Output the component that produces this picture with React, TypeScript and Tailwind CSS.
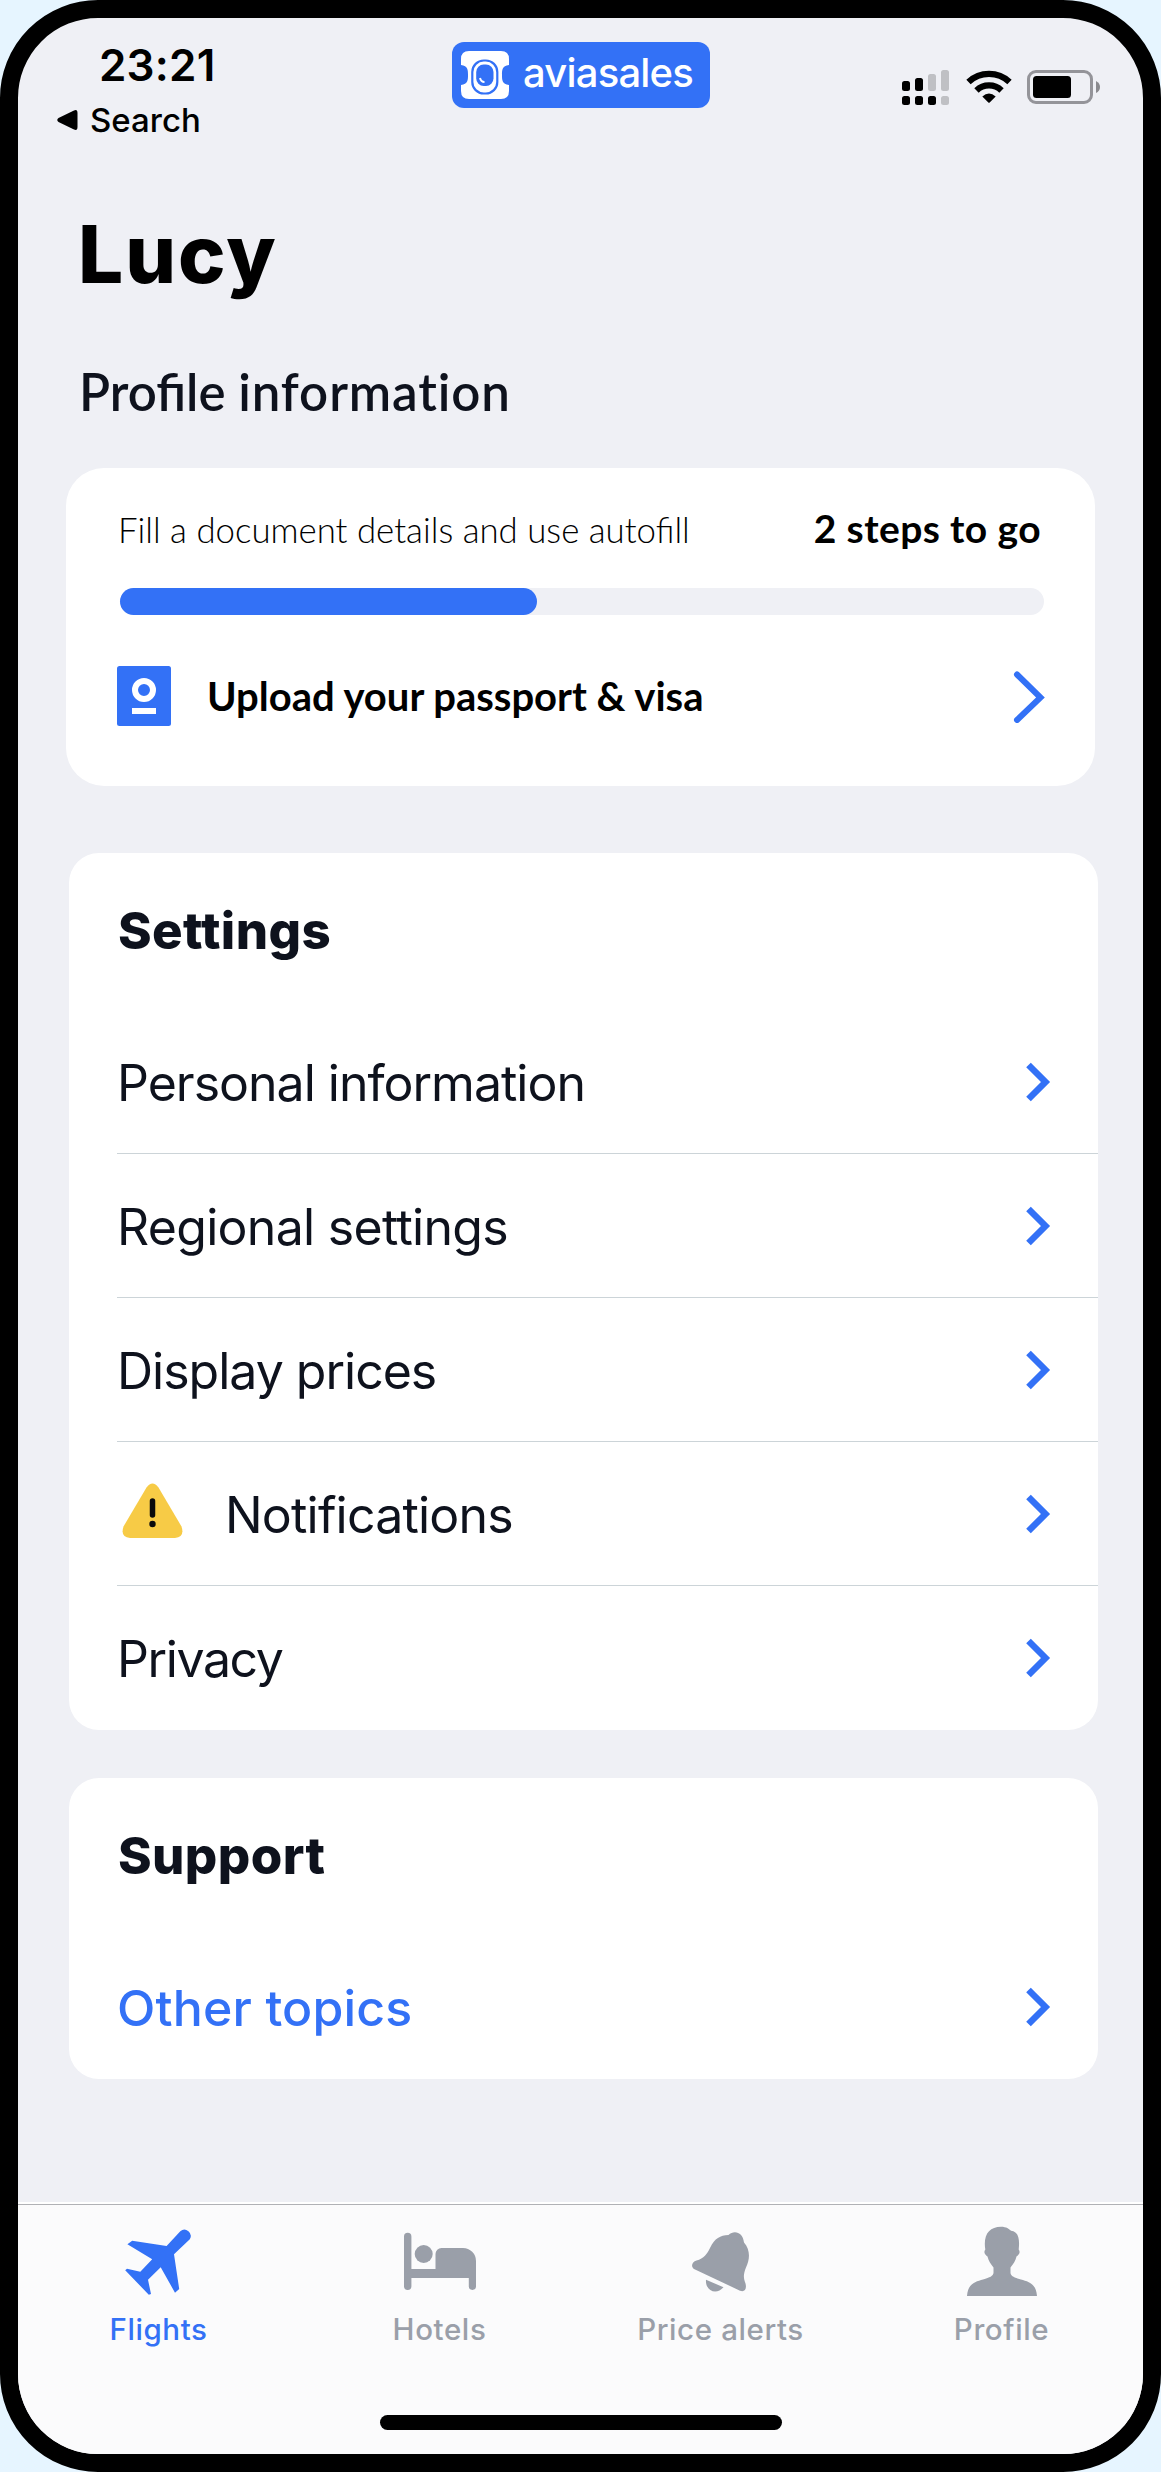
import React from 'react';
import { clsx } from 'clsx';

interface Row {
  label: string;
  warning?: boolean;
  accent?: boolean;
  spacing: string;
}

interface Tab {
  label: string;
  icon: React.FC;
  active?: boolean;
}

const PlaneIcon = () => (
  <svg width="68" height="68" viewBox="0 0 68 68" fill="currentColor">
    <path d="M55.3 3.2A6.3 6.3 0 0 1 64.8 11.2L49 26.3 54.2 61 50 64.7 35.7 39.3 23 51.7 26 66 23.8 66.7.2 42.3 2 40.7 15.3 43.7 27.2 31.3 2.4 16.3 7.2 12.7 41.6 18Z" />
  </svg>
);

const BedIcon = () => (
  <svg width="72" height="68" viewBox="0 0 72 68" fill="currentColor">
    <path d="M0 8.5a3.7 3.7 0 0 1 7.4 0V41H31.5V26a6 6 0 0 1 6-6H59a13 13 0 0 1 13 13V58.3a3.6 3.6 0 0 1-7.2 0V50H7.4V58.3a3.7 3.7 0 0 1-7.4 0Z" />
    <circle cx="19.7" cy="26" r="9" />
  </svg>
);

const BellIcon = () => (
  <svg width="60" height="68" viewBox="0 0 60 68" fill="currentColor">
    <path d="M3 41C-.5 38.5 1 34 5.5 32.6 13 30.5 16 26 19 20 24 10 29 7.5 37.5 7 43 1.5 52 4 53 14.5 59.5 22 59 31 55 39.5 52 47 52.5 50 54.5 55.5 56 61 53.5 64.5 49 62.7Z" />
    <path d="M15 51.7 32.5 59.3C25.5 67.5 14 63 15 51.7Z" />
  </svg>
);

const PersonIcon = () => (
  <svg width="70" height="68" viewBox="0 2 70 68" fill="currentColor" className="overflow-visible">
    <path d="M0 70C1 57 9 55.5 16 53.5 23 51.5 26 50 26.5 47V41.5C23.500 38 21.5 34.5 20.5 30.5 17.5 28.5 16.5 26 18.3 23.5 16 9 22 .7 34 .7 39.5.7 42 3 44 4.7 51 5.5 53 12 51.7 23.5 53.5 26 52.5 28.5 49.5 30.5 48.5 34.5 46.5 38 43.5 41.5V47C44 50 47 51.5 54 53.5 61 55.5 69 57 70 70Z" />
  </svg>
);

const settings: Row[] = [
  { label: 'Personal information', spacing: 'tracking-[-1px]' },
  { label: 'Regional settings', spacing: 'tracking-[-0.7px]' },
  { label: 'Display prices', spacing: 'tracking-[-1px]' },
  { label: 'Notifications', warning: true, spacing: 'tracking-[-0.8px]' },
  { label: 'Privacy', spacing: 'tracking-[-1.4px]' },
];

const support: Row[] = [{ label: 'Other topics', accent: true, spacing: 'tracking-[0.15px]' }];

const tabs: Tab[] = [
  { label: 'Flights', icon: PlaneIcon, active: true },
  { label: 'Hotels', icon: BedIcon },
  { label: 'Price alerts', icon: BellIcon },
  { label: 'Profile', icon: PersonIcon },
];

const WarningIcon = () => (
  <svg width="61" height="56" viewBox="0 0 61 56" className="mr-[42px] ml-[5px] -mt-[7px] flex-shrink-0">
    <path d="M24.5 4.5Q30.5-3.5 36.5 4.5L59.5 43.5Q63 54 53 55H8Q-2 54 1.5 43.5Z" fill="#f7cb46" />
    <path d="M30.5 18V32" stroke="#0a0a0c" strokeWidth="5.5" strokeLinecap="round" />
    <circle cx="30.5" cy="41" r="3.2" fill="#0a0a0c" />
  </svg>
);

const StatusIcons = () => (
  <svg width="200" height="36" viewBox="0 0 200 36">
    <g fill="#000">
      <rect x="0" y="11" width="8" height="10" rx="2.5" />
      <rect x="13" y="8" width="8" height="13" rx="2.5" />
      <rect x="0" y="26" width="8" height="9" rx="2.5" />
      <rect x="13" y="26" width="8" height="9" rx="2.5" />
      <rect x="26" y="26" width="8" height="9" rx="2.5" />
    </g>
    <g fill="#bfc0c4">
      <rect x="26" y="4" width="8" height="17" rx="2.5" />
      <rect x="39" y="0" width="8" height="21" rx="2.5" />
      <rect x="39" y="26" width="8" height="9" rx="2.5" />
    </g>
    <g fill="none" stroke="#000" strokeWidth="6.3">
      <path d="M66.5 12A30 30 0 0 1 107.5 12" />
      <path d="M74.5 20.5A18 18 0 0 1 99.5 20.5" />
    </g>
    <path d="M80.3 26.5Q87 20.5 93.7 26.5L87.7 32.5Q87 33 86.3 32.5Z" />
    <rect x="126.5" y="1.5" width="63" height="31" rx="7.5" fill="none" stroke="#949499" strokeWidth="3" />
    <rect x="131" y="6" width="38" height="22" rx="3.5" />
    <path d="M194 11Q198 13 198 17T194 23Z" fill="#8a8a8e" />
  </svg>
);

const LogoMark = () => (
  <svg width="48" height="48" viewBox="0 0 48 48">
    <path d="M8 0H40Q48 0 48 8V14C41 15 41 19 41 24S41 33 48 34V40Q48 48 40 48H8Q0 48 0 40V34C7 33 7 29 7 24S7 15 0 14V8Q0 0 8 0Z" fill="#fff" />
    <rect x="11.3" y="9.5" width="25" height="33" rx="11.5" fill="none" stroke="#3371f6" strokeWidth="2.2" />
    <rect x="15.2" y="13.5" width="17.3" height="21.5" rx="7.5" fill="#3371f6" />
    <path d="M19 27Q20 31 23.5 31" fill="none" stroke="#fff" strokeWidth="2" />
  </svg>
);

const Chevron = () => (
  <svg width="27" height="40" viewBox="0 0 27 40" fill="none" className="-mt-[2px] mr-[46px] ml-auto">
    <path d="M3.5 3 20.5 20 3.5 37" stroke="#3371f6" strokeWidth="6.5" />
  </svg>
);

const Section: React.FC<{ title: string; rows: Row[]; className?: string }> = ({ title, rows, className }) => (
  <section className={clsx('ml-[51px] w-[1029px] rounded-[30px] bg-white pt-[48px] pl-[48px]', className)}>
    <h2 className="mb-[49px] pl-px text-[51px] leading-[60px] font-extrabold tracking-[0.4px] text-[#0e121d]">{title}</h2>
    {rows.map(({ label, warning, accent, spacing }, i) => (
      <button
        key={label}
        className={clsx(
          'flex h-[144px] w-full items-center border-b pt-[2px] text-left text-[50px] leading-[60px]',
          i < rows.length - 1 ? 'border-[#ccd4d8]' : 'border-transparent',
          accent ? 'font-medium text-[#3371f6]' : 'text-[#0e121d]'
        )}
      >
        {warning && <WarningIcon />}
        <span className={spacing}>{label}</span>
        <Chevron />
      </button>
    ))}
  </section>
);

export default function App() {
  return (
    <div className="h-[2472px] w-[1161px] bg-[#e6f5ff] font-['Inter',sans-serif]">
      <div className="flex h-full w-full flex-col overflow-hidden rounded-[98px] border-[18px] border-black bg-[#eff0f5]">
        {/* Status bar */}
        <header className="flex h-[190px] flex-shrink-0 items-start">
          <div className="w-[434px] pt-[23px] pl-[39px]">
            <div className="pl-[42px] text-[44px] leading-[48px] font-semibold tracking-[0.2px]">23:21</div>
            <div className="mt-[11px] flex items-center text-[33px] leading-[40px] font-medium">
              <svg width="22" height="22" viewBox="0 0 22 22" className="mr-[11px]">
                <path d="M1.5 9 17 1.5Q20.5 0 20.5 4V18Q20.5 22 17 20.5L1.5 13Q-1 11 1.5 9Z" />
              </svg>
              <span>Search</span>
            </div>
          </div>
          <div className="mt-[24px] flex h-[66px] w-[258px] items-center rounded-[12px] bg-[#3371f6] pl-[9px]">
            <LogoMark />
            <span className="-mt-[5px] pl-[14px] text-[40px] leading-[48px] font-medium tracking-[-0.8px] text-white">
              aviasales
            </span>
          </div>
          <div className="pt-[52px] pl-[192px]">
            <StatusIcons />
          </div>
        </header>

        <h1 className="pl-[60px] text-[80px] leading-[92px] font-extrabold tracking-[2px]">Lucy</h1>
        <h2 className="mt-[62px] pl-[61px] font-['Lato',sans-serif] text-[51px] leading-[60px] font-semibold text-[#0e121d]">
          <span>Profile</span> <span className="tracking-[0.9px]">information</span>
        </h2>

        {/* Document progress card */}
        <section className="mt-[46px] ml-[48px] h-[318px] w-[1029px] flex-shrink-0 rounded-[38px] bg-white pt-[38px] font-['Lato',sans-serif]">
          <div className="flex h-[44px] items-baseline justify-between pr-[54px] pl-[52px] leading-[45px]">
            <span className="text-[34.8px] font-light">Fill a document details and use autofill</span>
            <span className="text-[39px] font-bold tracking-[0.4px]">2 steps to go</span>
          </div>
          <div className="mt-[38px] ml-[54px] h-[27px] w-[924px] rounded-full bg-[#eff0f5]">
            <div className="h-full w-[417px] rounded-full bg-[#3371f6]" />
          </div>
          <button className="mt-[51px] flex h-[60px] w-full items-center pl-[51px] text-left">
            <svg width="54" height="60" viewBox="0 0 54 60">
              <rect width="54" height="60" rx="2.5" fill="#3371f6" />
              <circle cx="27" cy="24" r="9" fill="none" stroke="#fff" strokeWidth="6" />
              <path d="M15 45H39" stroke="#fff" strokeWidth="6" />
            </svg>
            <span className="pl-[36px] text-[40px] leading-[60px] font-bold">Upload your passport &amp; visa</span>
            <svg width="34" height="52" viewBox="0 0 34 52" fill="none" className="mt-[2px] mr-[49px] ml-auto">
              <path d="M5 3.5 28.500 26.5 5 49" stroke="#3371f6" strokeWidth="6" strokeLinecap="round" />
            </svg>
          </button>
        </section>

        <Section title="Settings" rows={settings} className="mt-[67px]" />
        <Section title="Support" rows={support} className="mt-[48px]" />

        {/* Tab bar */}
        <nav className="mt-auto h-[252px] flex-shrink-0 border-t-2 border-white bg-[#fbfbfc]">
          <div className="flex border-t border-[#b0b1b5] pt-[23px]">
            {tabs.map(({ label, icon: Icon, active }) => (
              <button
                key={label}
                className={clsx('flex w-[281px] flex-col items-center', active ? 'text-[#3371f6]' : 'text-[#9a9fa9]')}
              >
                <Icon />
                <span className="mt-[15px] text-[29.5px] leading-[36px] font-medium tracking-[0.6px]">{label}</span>
              </button>
            ))}
          </div>
          <div className="mt-[68px] ml-[362px] h-[15px] w-[402px] rounded-full bg-black" />
        </nav>
      </div>
    </div>
  );
}
